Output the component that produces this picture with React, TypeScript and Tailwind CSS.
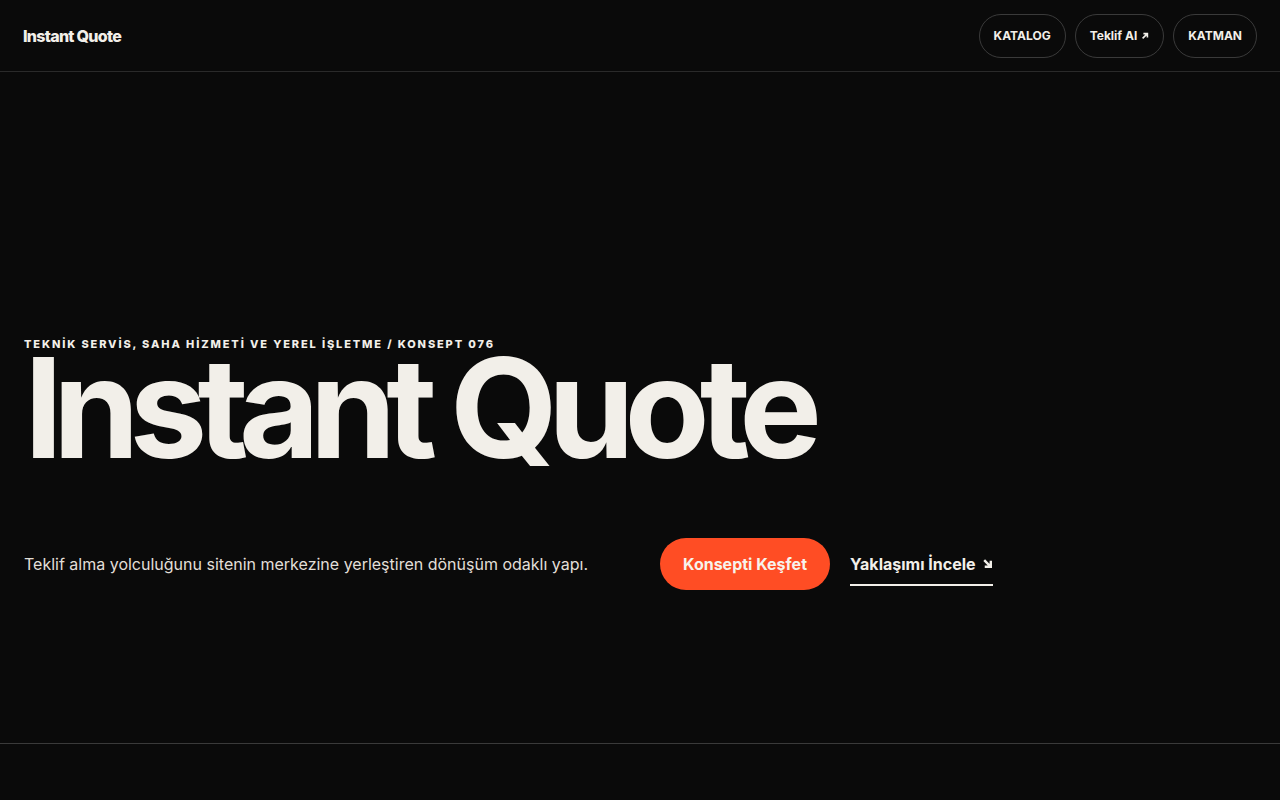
import React from 'react';

const NavPill: React.FC<{ label: string; arrow?: boolean }> = ({ label, arrow }) => (
  <a
    href="#"
    className="h-[44px] px-[14px] flex items-center gap-1 rounded-full border border-[#3a3a3a] text-[12px] font-bold text-[#f2efe9]"
  >
    {label}
    {arrow && (
      <svg width="8" height="8" viewBox="0 0 10 10" fill="none" stroke="currentColor" strokeWidth="2">
        <path d="M2 8 L8 2 M3 2 H8 V7" />
      </svg>
    )}
  </a>
);

export default function App() {
  return (
    <div className="min-h-screen bg-[#0a0a0a] text-[#f2efe9] font-['Inter',sans-serif]">
      <header className="h-[72px] px-[23px] flex items-center justify-between border-b border-[#2a2a2a]">
        <a href="#" className="text-[16px] font-extrabold tracking-[-0.045em] text-[#f2efe9]">Instant Quote</a>
        <nav className="flex items-center gap-[9px]">
          <NavPill label="KATALOG" />
          <NavPill label="Teklif Al" arrow />
          <NavPill label="KATMAN" />
        </nav>
      </header>

      <section className="h-[672px] px-6 pt-[267px] border-b border-[#3a3a3a]">
        <p className="text-[11px] font-extrabold tracking-[0.17em] leading-none text-[#f2efe9]">
          TEKNİK SERVİS, SAHA HİZMETİ VE YEREL İŞLETME / KONSEPT 076
        </p>
        <h1 className="mt-[6px] text-[139px] font-bold leading-[0.75] tracking-[-0.072em] text-[#f2efe9]">
          Instant Quote
        </h1>
        <div className="mt-[78px] flex items-center">
          <p className="w-[636px] text-[16px] text-[#e2dfd8]">
            Teklif alma yolculuğunu sitenin merkezine yerleştiren dönüşüm odaklı yapı.
          </p>
          <a href="#" className="h-[52px] px-[23px] flex items-center rounded-full bg-[#ff4d24] text-[16px] font-bold text-[#f7f3ec]">
            Konsepti Keşfet
          </a>
          <a href="#" className="ml-5 pt-[9px] pb-[8px] flex items-center gap-[6px] border-b-2 border-[#f2efe9] text-[16px] font-bold text-[#f2efe9]">
            Yaklaşımı İncele
            <svg width="11" height="11" viewBox="0 0 10 10" fill="none" stroke="currentColor" strokeWidth="2.2">
              <path d="M2 2 L8 8 M8 2.5 V8 H2.5" />
            </svg>
          </a>
        </div>
      </section>
    </div>
  );
}
